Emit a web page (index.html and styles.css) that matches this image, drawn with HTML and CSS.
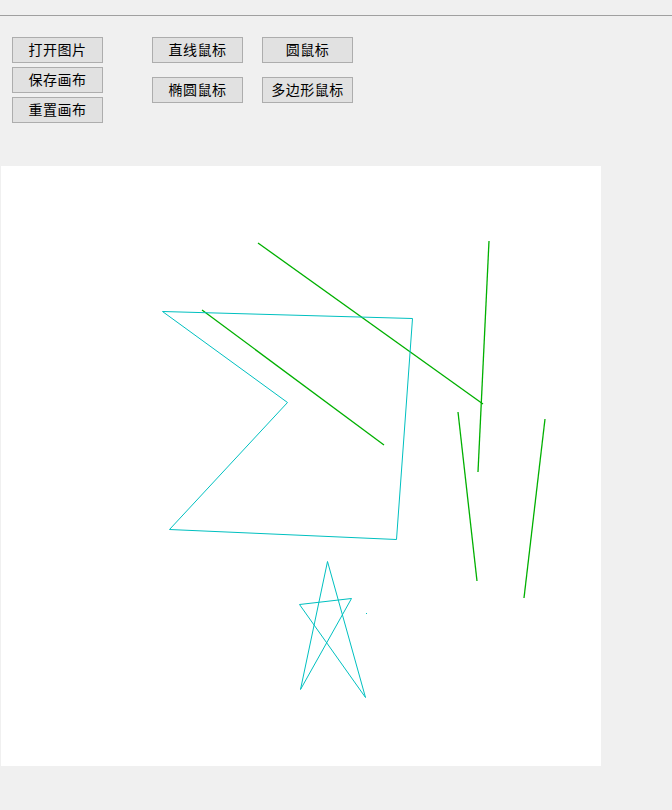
FILE: index.html
```html
<!DOCTYPE html>
<html>
<head>
<meta charset="utf-8">
<link rel="stylesheet" href="styles.css">
</head>
<body>
<div class="menubar"></div>
<div class="toolbar">
  <div class="col col-tight">
    <button class="btn">打开图片</button>
    <button class="btn">保存画布</button>
    <button class="btn">重置画布</button>
  </div>
  <div class="col col-wide col-second">
    <button class="btn">直线鼠标</button>
    <button class="btn">椭圆鼠标</button>
  </div>
  <div class="col col-wide col-third">
    <button class="btn">圆鼠标</button>
    <button class="btn">多边形鼠标</button>
  </div>
</div>
<div class="canvas">
  <svg width="600" height="600" viewBox="0 0 600 600">
    <g class="green">
      <line x1="257" y1="77" x2="482" y2="238"/>
      <line x1="201" y1="144" x2="383" y2="279"/>
      <line x1="488" y1="75" x2="477" y2="306"/>
      <line x1="457" y1="246" x2="476" y2="415"/>
      <line x1="544" y1="253" x2="523" y2="432"/>
    </g>
    <g class="cyan">
      <polygon points="161.5,145.5 411.5,152.5 395.5,373.5 168.5,363.5 286.5,236.5"/>
      <polygon points="326.5,395.5 364.5,531.5 298.5,438.5 350.5,432.5 299.5,523.5"/>
    </g>
    <rect class="dot" x="365" y="447" width="1" height="1"/>
  </svg>
</div>
</body>
</html>
```

FILE: styles.css
```css
html, body {
  margin: 0;
  padding: 0;
  background: #f0f0f0;
  width: 672px;
  height: 810px;
  overflow: hidden;
}
.menubar {
  height: 15px;
  background: #f0f0f0;
  border-bottom: 1px solid #a0a0a0;
}
.toolbar {
  height: 150px;
  box-sizing: border-box;
  padding: 21px 0 0 12px;
  display: flex;
  align-items: flex-start;
}
.col {
  display: flex;
  flex-direction: column;
}
.col-tight { gap: 4px; }
.col-wide { gap: 14px; }
.col-second { margin-left: 49px; }
.col-third { margin-left: 19px; }
.btn {
  width: 91px;
  height: 26px;
  box-sizing: border-box;
  margin: 0;
  padding: 0 0 2px 0;
  background: #e1e1e1;
  border: 1px solid #adadad;
  border-radius: 0;
  font-family: "Noto Sans CJK SC", "Noto Sans", sans-serif;
  font-size: 14px;
  font-weight: 400;
  letter-spacing: 0.5px;
  color: #000;
  line-height: 22px;
  text-align: center;
}
.canvas {
  margin-left: 1px;
  width: 600px;
  height: 600px;
  background: #fff;
}
.canvas svg {
  display: block;
}
.green line {
  stroke: #00b000;
  stroke-width: 1.3;
}
.cyan polygon {
  fill: none;
  stroke: #00c0c0;
  stroke-width: 1;
  stroke-linejoin: miter;
}
.dot {
  fill: #00c0c0;
}
```
